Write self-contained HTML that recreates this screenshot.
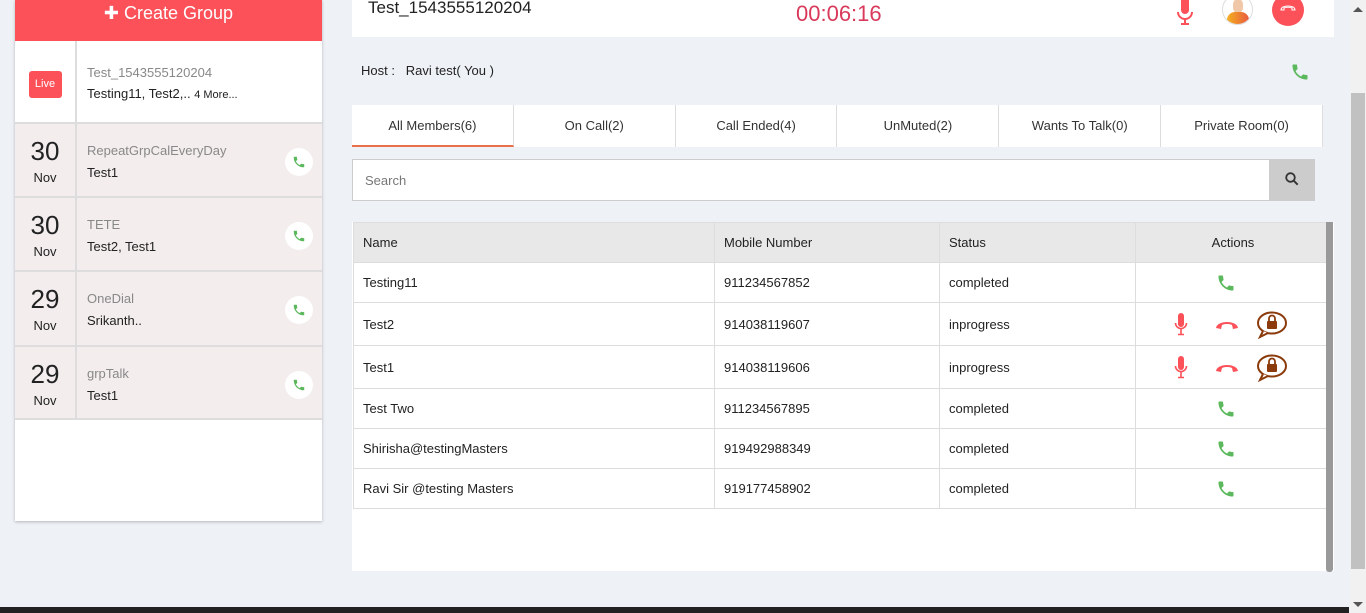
<!DOCTYPE html>
<html><head><meta charset="utf-8"><style>
*{box-sizing:border-box;margin:0;padding:0}
body{width:1366px;height:613px;overflow:hidden;background:#eef1f6;font-family:"Liberation Sans",sans-serif;color:#333;position:relative}
.abs{position:absolute}
.side{left:15px;top:0;width:307px;height:521px;background:#fff;box-shadow:0 1px 3px rgba(0,0,0,.25)}
.create{left:0;top:0;width:307px;height:41px;background:#fc5159;color:#fff;font-size:18px;text-align:center;line-height:26px}
.item{left:0;width:307px;background:#f3eded;border-bottom:2px solid #ddd}
.date{position:absolute;left:0;top:0;width:62px;height:100%;border-right:2px solid #ddd;text-align:center}
.date b{display:block;font-weight:normal;font-size:26px;margin-top:12px;color:#222}
.date span{font-size:13px;color:#222;display:block;margin-top:3px}
.t1{position:absolute;left:72px;top:19px;font-size:13px;color:#888}
.t2{position:absolute;left:72px;top:41px;font-size:13px;color:#222}
.pc{position:absolute;left:270px;top:24px;width:28px;height:28px;border-radius:50%;background:#fff}
.pc svg{position:absolute;left:7px;top:7px}
.tabs{left:352px;top:105px;width:971px;height:42px;background:#fff;display:flex}
.tabs div{width:162px;text-align:center;font-size:13px;line-height:42px;border-right:1px solid #ddd;color:#333}
table{border-collapse:collapse;font-size:13px;color:#222}
td,th{border:1px solid #ddd;text-align:left;padding-left:9px;font-weight:normal}
th{background:#e8e8e8;height:40px}
.ph{position:relative;padding:0}
.ph svg{position:absolute;left:80px;top:10px}
</style></head><body>
<div class="abs side">
 <div class="abs create">✚ Create Group</div>
 <div class="abs" style="left:0;top:41px;width:307px;height:83px;background:#fff;border-bottom:2px solid #ddd">
  <div class="date" style="background:#fff"><div style="margin:30px auto 0;width:33px;height:27px;background:#fc5159;border-radius:3px;color:#fff;font-size:11px;line-height:27px">Live</div></div>
  <div class="t1" style="top:24px">Test_1543555120204</div>
  <div class="t2" style="top:45px">Testing11, Test2,.. <span style="font-size:11px">4 More...</span></div>
 </div>
 <div class="abs item" style="top:124px;height:74px"><div class="date"><b>30</b><span>Nov</span></div><div class="t1">RepeatGrpCalEveryDay</div><div class="t2">Test1</div><div class="pc"><svg width="14" height="14" viewBox="0 0 24 24"><path fill="#5cb85c" d="M6.6 10.8c1.4 2.8 3.8 5.1 6.6 6.6l2.2-2.2c.3-.3.7-.4 1-.2 1.1.4 2.3.6 3.6.6.6 0 1 .4 1 1V20c0 .6-.4 1-1 1C10.6 21 3 13.4 3 4c0-.6.4-1 1-1h3.5c.6 0 1 .4 1 1 0 1.3.2 2.5.6 3.6.1.3 0 .7-.2 1z"/></svg></div></div>
 <div class="abs item" style="top:198px;height:74px"><div class="date"><b>30</b><span>Nov</span></div><div class="t1">TETE</div><div class="t2">Test2, Test1</div><div class="pc"><svg width="14" height="14" viewBox="0 0 24 24"><path fill="#5cb85c" d="M6.6 10.8c1.4 2.8 3.8 5.1 6.6 6.6l2.2-2.2c.3-.3.7-.4 1-.2 1.1.4 2.3.6 3.6.6.6 0 1 .4 1 1V20c0 .6-.4 1-1 1C10.6 21 3 13.4 3 4c0-.6.4-1 1-1h3.5c.6 0 1 .4 1 1 0 1.3.2 2.5.6 3.6.1.3 0 .7-.2 1z"/></svg></div></div>
 <div class="abs item" style="top:272px;height:75px"><div class="date"><b>29</b><span>Nov</span></div><div class="t1">OneDial</div><div class="t2">Srikanth..</div><div class="pc"><svg width="14" height="14" viewBox="0 0 24 24"><path fill="#5cb85c" d="M6.6 10.8c1.4 2.8 3.8 5.1 6.6 6.6l2.2-2.2c.3-.3.7-.4 1-.2 1.1.4 2.3.6 3.6.6.6 0 1 .4 1 1V20c0 .6-.4 1-1 1C10.6 21 3 13.4 3 4c0-.6.4-1 1-1h3.5c.6 0 1 .4 1 1 0 1.3.2 2.5.6 3.6.1.3 0 .7-.2 1z"/></svg></div></div>
 <div class="abs item" style="top:347px;height:73px"><div class="date"><b>29</b><span>Nov</span></div><div class="t1">grpTalk</div><div class="t2">Test1</div><div class="pc"><svg width="14" height="14" viewBox="0 0 24 24"><path fill="#5cb85c" d="M6.6 10.8c1.4 2.8 3.8 5.1 6.6 6.6l2.2-2.2c.3-.3.7-.4 1-.2 1.1.4 2.3.6 3.6.6.6 0 1 .4 1 1V20c0 .6-.4 1-1 1C10.6 21 3 13.4 3 4c0-.6.4-1 1-1h3.5c.6 0 1 .4 1 1 0 1.3.2 2.5.6 3.6.1.3 0 .7-.2 1z"/></svg></div></div>
</div>

<div class="abs" style="left:352px;top:0;width:982px;height:37px;background:#fff">
 <div class="abs" style="left:16px;top:-2px;font-size:17px;color:#222">Test_1543555120204</div>
 <div class="abs" style="left:444px;top:1px;font-size:22px;color:#d93a5b">00:06:16</div>
 <svg class="abs" style="left:824px;top:0" width="18" height="26" viewBox="0 0 18 26"><rect x="5" y="-4" width="8" height="18" rx="4" fill="#fc5159"/><path d="M2 12a7 7 0 0 0 14 0" stroke="#fc5159" stroke-width="2" fill="none"/><path d="M9 19v5M5 24h8" stroke="#fc5159" stroke-width="2"/></svg>
 <div class="abs" style="left:870px;top:-6px;width:31px;height:31px;border-radius:50%;background:#fff;border:1px solid #ddd;overflow:hidden"><div style="position:absolute;left:10px;top:4px;width:10px;height:14px;border-radius:5px;background:#f0c8a8"></div><div style="position:absolute;left:4px;top:17px;width:22px;height:12px;border-radius:8px 8px 0 0;background:linear-gradient(90deg,#f5b020,#e85a40)"></div></div>
 <div class="abs" style="left:920px;top:-6px;width:32px;height:32px;border-radius:50%;background:#fc5159"><svg style="position:absolute;left:8px;top:10px" width="16" height="8" viewBox="0 0 16 8"><path d="M1 6c0-3 4-4 7-4s7 1 7 4l-3 0 0-2c-2-1-6-1-8 0l0 2z" fill="none" stroke="#fff" stroke-width="1"/></svg></div>
</div>
<div class="abs" style="left:361px;top:63px;font-size:13px;color:#222">Host :&nbsp;&nbsp; Ravi test( You )</div>
<svg class="abs" style="left:1290px;top:62px" width="20" height="20" viewBox="0 0 24 24"><path fill="#5cb85c" d="M6.6 10.8c1.4 2.8 3.8 5.1 6.6 6.6l2.2-2.2c.3-.3.7-.4 1-.2 1.1.4 2.3.6 3.6.6.6 0 1 .4 1 1V20c0 .6-.4 1-1 1C10.6 21 3 13.4 3 4c0-.6.4-1 1-1h3.5c.6 0 1 .4 1 1 0 1.3.2 2.5.6 3.6.1.3 0 .7-.2 1z"/></svg>

<div class="abs tabs">
 <div style="border-bottom:2px solid #e8704a">All Members(6)</div><div>On Call(2)</div><div>Call Ended(4)</div><div>UnMuted(2)</div><div>Wants To Talk(0)</div><div>Private Room(0)</div>
</div>
<div class="abs" style="left:352px;top:159px;width:918px;height:42px;background:#fff;border:1px solid #ccc;font-size:13px;color:#777;padding:13px 0 0 12px">Search</div>
<div class="abs" style="left:1269px;top:159px;width:46px;height:42px;background:#ccc"><svg style="position:absolute;left:16px;top:13px" width="14" height="14" viewBox="0 0 14 14"><circle cx="5.5" cy="5.5" r="4.3" stroke="#333" stroke-width="1.8" fill="none"/><path d="M8.7 8.7l4 4" stroke="#333" stroke-width="2"/></svg></div>

<div class="abs" style="left:352px;top:222px;width:982px;height:349px;background:#fff"></div>
<table class="abs" style="left:353px;top:222px;width:978px">
<tr><th style="width:361px">Name</th><th style="width:225px">Mobile Number</th><th style="width:196px">Status</th><th style="text-align:center;padding:0">Actions</th></tr>
<tr style="height:40px"><td>Testing11</td><td>911234567852</td><td>completed</td><td class="ph"><svg width="20" height="20" viewBox="0 0 24 24"><path fill="#5cb85c" d="M6.6 10.8c1.4 2.8 3.8 5.1 6.6 6.6l2.2-2.2c.3-.3.7-.4 1-.2 1.1.4 2.3.6 3.6.6.6 0 1 .4 1 1V20c0 .6-.4 1-1 1C10.6 21 3 13.4 3 4c0-.6.4-1 1-1h3.5c.6 0 1 .4 1 1 0 1.3.2 2.5.6 3.6.1.3 0 .7-.2 1z"/></svg></td></tr>
<tr style="height:43px"><td>Test2</td><td>914038119607</td><td>inprogress</td><td style="padding:0;position:relative"><svg style="position:absolute;left:38px;top:10px" width="14" height="24" viewBox="0 0 14 24"><rect x="4" y="0" width="6" height="14" rx="3" fill="#fc5159"/><path d="M1.5 10a5.5 5.5 0 0 0 11 0" stroke="#fc5159" stroke-width="1.6" fill="none"/><path d="M7 16v5M4 21.5h6" stroke="#fc5159" stroke-width="1.6"/></svg><svg style="position:absolute;left:79px;top:16px" width="24" height="11" viewBox="0 0 24 11"><path d="M1 9c1-8 21-8 22 0l-5 1-1-4c-3-1.3-7-1.3-10 0l-1 4z" fill="#fc5159"/></svg><svg style="position:absolute;left:120px;top:8px" width="32" height="28" viewBox="0 0 32 28"><ellipse cx="16" cy="12" rx="14" ry="10.5" fill="none" stroke="#8b3a0c" stroke-width="2"/><path d="M7 20l-3 6 8-4" fill="#fff" stroke="#8b3a0c" stroke-width="2"/><rect x="11" y="10" width="10" height="8" rx="1" fill="#8b3a0c"/><path d="M13 10V7.5a3 3 0 0 1 6 0V10" fill="none" stroke="#8b3a0c" stroke-width="1.8"/></svg></td></tr>
<tr style="height:43px"><td>Test1</td><td>914038119606</td><td>inprogress</td><td style="padding:0;position:relative"><svg style="position:absolute;left:38px;top:10px" width="14" height="24" viewBox="0 0 14 24"><rect x="4" y="0" width="6" height="14" rx="3" fill="#fc5159"/><path d="M1.5 10a5.5 5.5 0 0 0 11 0" stroke="#fc5159" stroke-width="1.6" fill="none"/><path d="M7 16v5M4 21.5h6" stroke="#fc5159" stroke-width="1.6"/></svg><svg style="position:absolute;left:79px;top:16px" width="24" height="11" viewBox="0 0 24 11"><path d="M1 9c1-8 21-8 22 0l-5 1-1-4c-3-1.3-7-1.3-10 0l-1 4z" fill="#fc5159"/></svg><svg style="position:absolute;left:120px;top:8px" width="32" height="28" viewBox="0 0 32 28"><ellipse cx="16" cy="12" rx="14" ry="10.5" fill="none" stroke="#8b3a0c" stroke-width="2"/><path d="M7 20l-3 6 8-4" fill="#fff" stroke="#8b3a0c" stroke-width="2"/><rect x="11" y="10" width="10" height="8" rx="1" fill="#8b3a0c"/><path d="M13 10V7.5a3 3 0 0 1 6 0V10" fill="none" stroke="#8b3a0c" stroke-width="1.8"/></svg></td></tr>
<tr style="height:40px"><td>Test Two</td><td>911234567895</td><td>completed</td><td class="ph"><svg width="20" height="20" viewBox="0 0 24 24"><path fill="#5cb85c" d="M6.6 10.8c1.4 2.8 3.8 5.1 6.6 6.6l2.2-2.2c.3-.3.7-.4 1-.2 1.1.4 2.3.6 3.6.6.6 0 1 .4 1 1V20c0 .6-.4 1-1 1C10.6 21 3 13.4 3 4c0-.6.4-1 1-1h3.5c.6 0 1 .4 1 1 0 1.3.2 2.5.6 3.6.1.3 0 .7-.2 1z"/></svg></td></tr>
<tr style="height:40px"><td>Shirisha@testingMasters</td><td>919492988349</td><td>completed</td><td class="ph"><svg width="20" height="20" viewBox="0 0 24 24"><path fill="#5cb85c" d="M6.6 10.8c1.4 2.8 3.8 5.1 6.6 6.6l2.2-2.2c.3-.3.7-.4 1-.2 1.1.4 2.3.6 3.6.6.6 0 1 .4 1 1V20c0 .6-.4 1-1 1C10.6 21 3 13.4 3 4c0-.6.4-1 1-1h3.5c.6 0 1 .4 1 1 0 1.3.2 2.5.6 3.6.1.3 0 .7-.2 1z"/></svg></td></tr>
<tr style="height:40px"><td>Ravi Sir @testing Masters</td><td>919177458902</td><td>completed</td><td class="ph"><svg width="20" height="20" viewBox="0 0 24 24"><path fill="#5cb85c" d="M6.6 10.8c1.4 2.8 3.8 5.1 6.6 6.6l2.2-2.2c.3-.3.7-.4 1-.2 1.1.4 2.3.6 3.6.6.6 0 1 .4 1 1V20c0 .6-.4 1-1 1C10.6 21 3 13.4 3 4c0-.6.4-1 1-1h3.5c.6 0 1 .4 1 1 0 1.3.2 2.5.6 3.6.1.3 0 .7-.2 1z"/></svg></td></tr>
</table>
<div class="abs" style="left:1326px;top:222px;width:7px;height:350px;background:#999;border-radius:0 0 3px 3px"></div>

<div class="abs" style="left:1350px;top:0;width:16px;height:613px;background:#f1f1f1"></div>
<div class="abs" style="left:1351px;top:93px;width:14px;height:476px;background:#c1c1c1"></div>
<div class="abs" style="left:1353px;top:7px;width:0;height:0;border:5px solid transparent;border-bottom:5px solid #555;border-top:0"></div>
<div class="abs" style="left:1353px;top:602px;width:0;height:0;border:5px solid transparent;border-top:5px solid #555;border-bottom:0"></div>
<div class="abs" style="left:0;top:607px;width:1349px;height:6px;background:#222"></div>
</body></html>
